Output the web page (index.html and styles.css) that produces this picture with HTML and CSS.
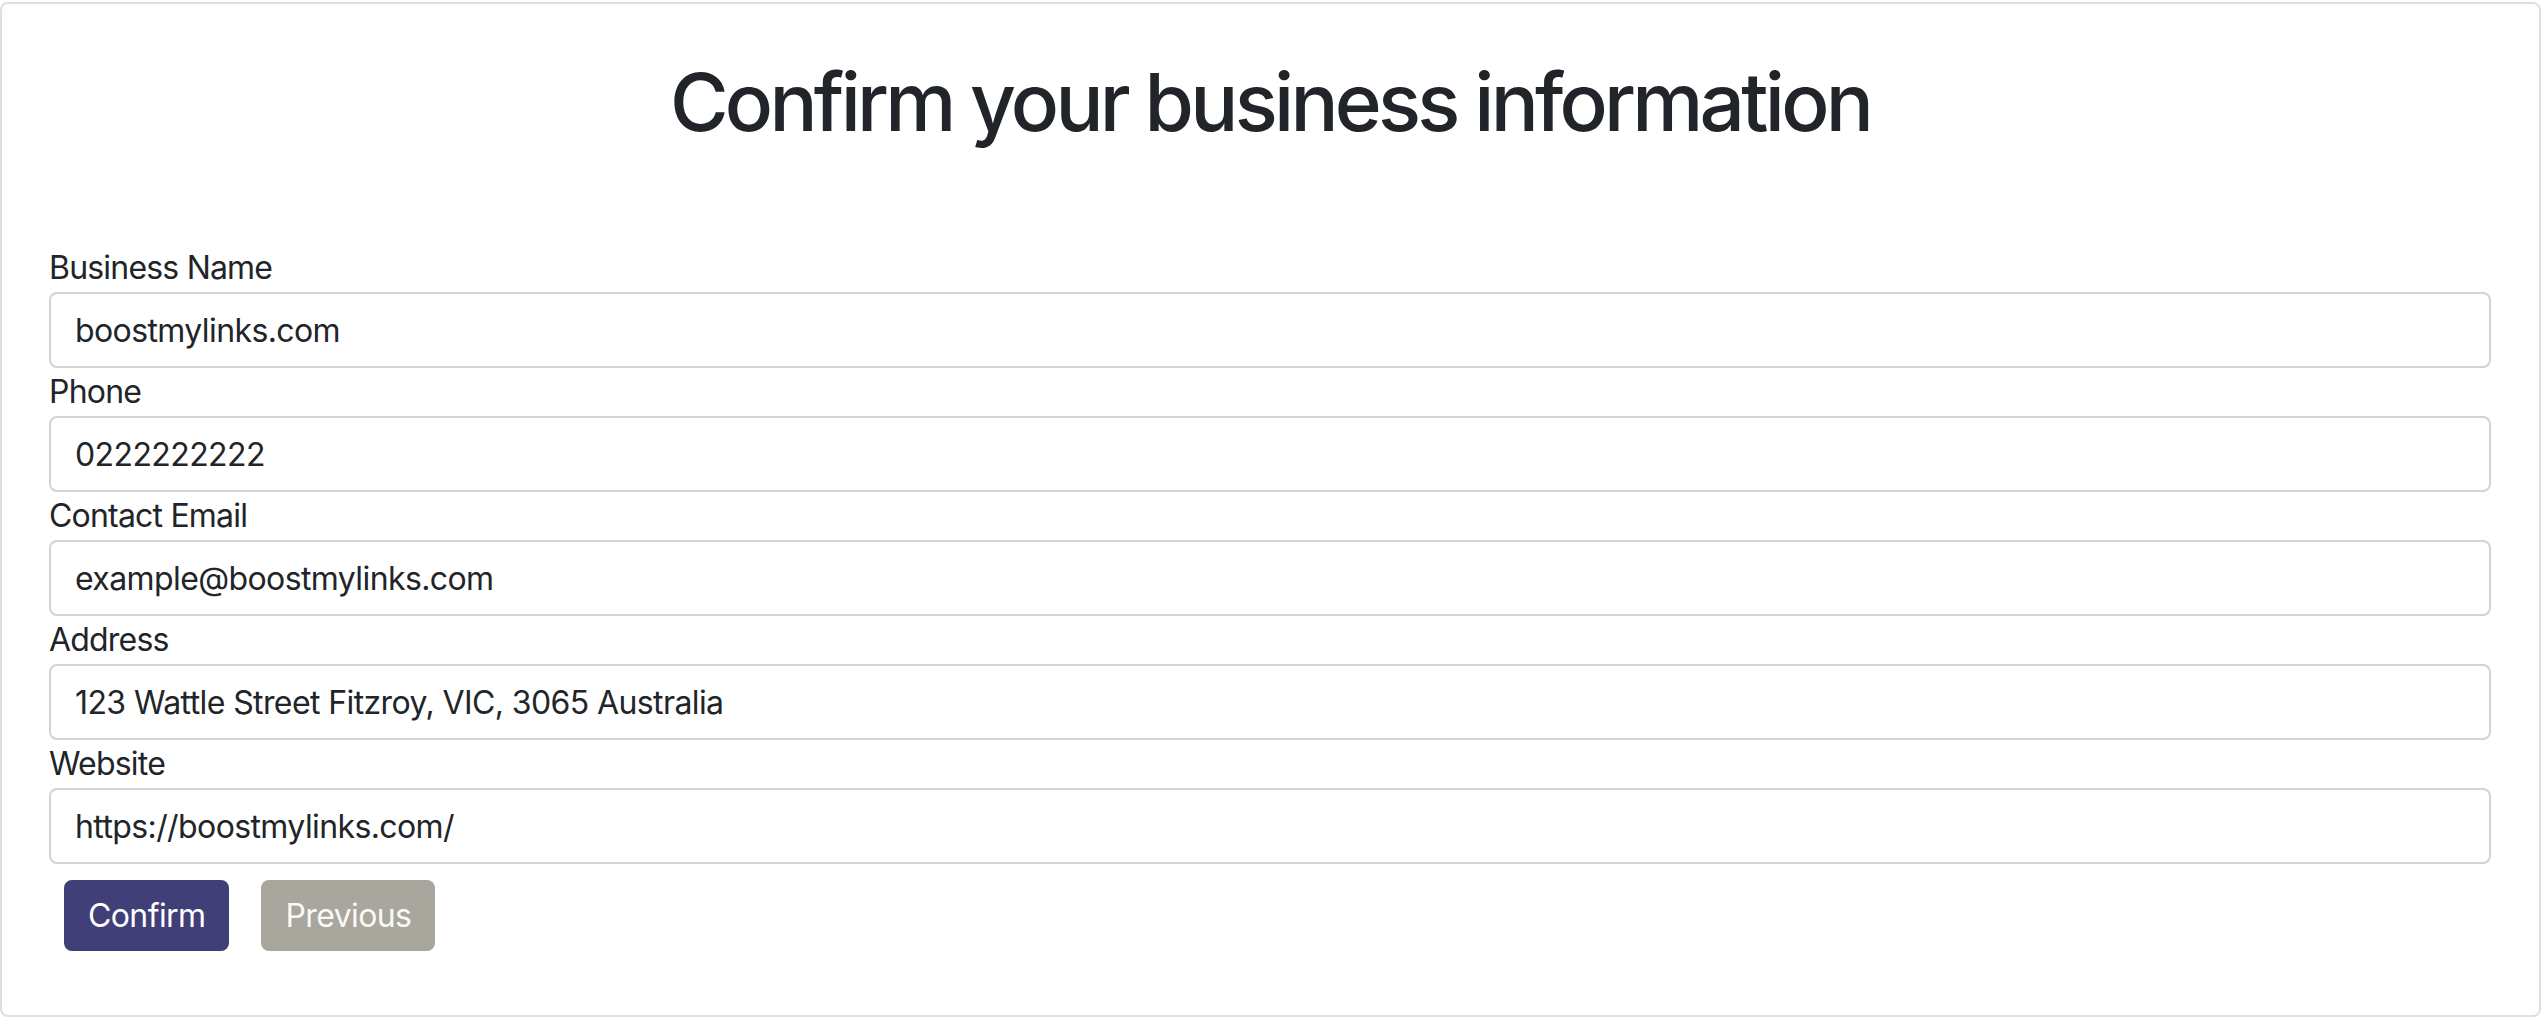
FILE: index.html
```html
<!DOCTYPE html>
<html lang="en">
<head>
<meta charset="utf-8">
<title>Confirm your business information</title>
<link rel="stylesheet" href="styles.css">
</head>
<body>
<div class="page">
  <form class="card">
    <h1 class="title">Confirm your business information</h1>
    <div class="fields">
      <label class="label" for="bn">Business Name</label>
      <input class="field" id="bn" type="text" value="boostmylinks.com">
      <label class="label" for="ph">Phone</label>
      <input class="field" id="ph" type="text" value="0222222222">
      <label class="label" for="em">Contact Email</label>
      <input class="field" id="em" type="text" value="example@boostmylinks.com">
      <label class="label" for="ad">Address</label>
      <input class="field" id="ad" type="text" value="123 Wattle Street Fitzroy, VIC, 3065 Australia">
      <label class="label" for="ws">Website</label>
      <input class="field" id="ws" type="text" value="https://boostmylinks.com/">
    </div>
    <div class="actions">
      <button type="button" class="btn btn-primary">Confirm</button>
      <button type="button" class="btn btn-secondary">Previous</button>
    </div>
  </form>
</div>
</body>
</html>
```
FILE: styles.css
```css
html, body {
  margin: 0;
  padding: 0;
  background: #ffffff;
}

body {
  font-family: Inter, "Liberation Sans", Arial, sans-serif;
  color: #212529;
}

.page {
  padding-top: 2px;
}

.card {
  box-sizing: border-box;
  width: 2541px;
  height: 1015px;
  border: 2px solid #dfdfdf;
  border-radius: 8px;
  background: #ffffff;
  padding: 50px 48px 0 47px;
  display: flex;
  flex-direction: column;
}

.title {
  margin: 0 0 94px 0;
  font-size: 80px;
  font-weight: 500;
  line-height: 96px;
  letter-spacing: -3.75px;
  text-align: center;
  color: #212529;
}

.fields {
  display: flex;
  flex-direction: column;
}

.label {
  display: block;
  font-size: 32px;
  line-height: 48px;
  letter-spacing: -0.8px;
  color: #212529;
}

.field {
  box-sizing: border-box;
  width: 100%;
  height: 76px;
  margin: 0;
  border: 2px solid #ced4da;
  border-radius: 8px;
  padding: 0 24px;
  font-family: Inter, "Liberation Sans", Arial, sans-serif;
  font-size: 32px;
  letter-spacing: -0.6px;
  color: #212529;
  background: #ffffff;
  outline: none;
}

.actions {
  display: flex;
  gap: 32px;
  margin-top: 16px;
  padding-left: 15px;
}

.btn {
  box-sizing: border-box;
  height: 71px;
  padding: 0 22px;
  border: 2px solid transparent;
  border-radius: 8px;
  font-family: Inter, "Liberation Sans", Arial, sans-serif;
  font-size: 32px;
  letter-spacing: -0.6px;
  line-height: 1;
  color: #ffffff;
  cursor: pointer;
}

.btn-primary {
  background: #413f77;
  border-color: #413f77;
}

.btn-secondary {
  background: #a9a69e;
  border-color: #a9a69e;
  color: rgba(255, 255, 255, 0.96);
}
```
